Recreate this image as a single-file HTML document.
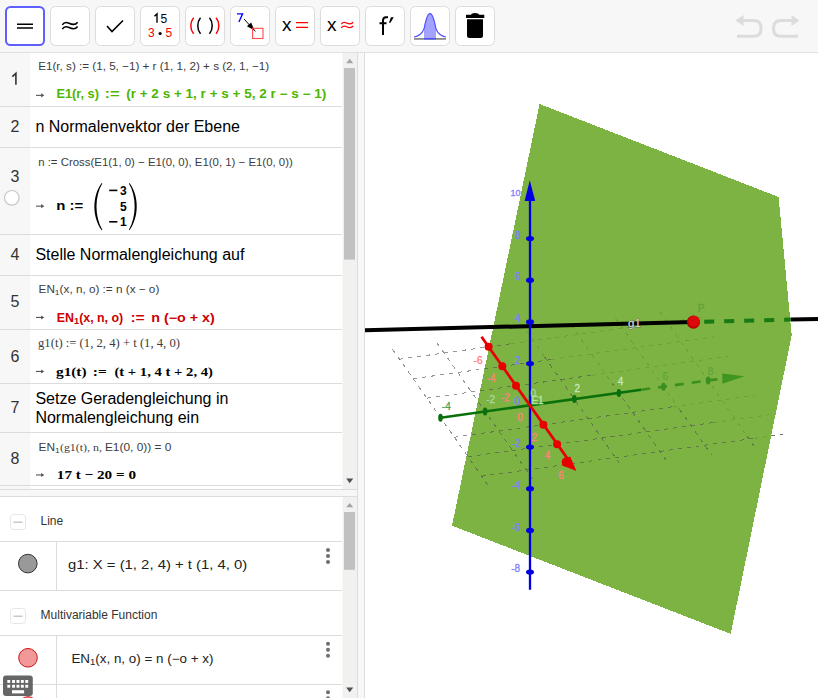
<!DOCTYPE html>
<html><head><meta charset="utf-8">
<style>
html,body{margin:0;padding:0;width:820px;height:700px;overflow:hidden;background:#fff}
svg{display:block}
text{font-family:"Liberation Sans",sans-serif}
.serif,.serif text,text.serif,tspan.serif{font-family:"Liberation Serif",serif}
</style></head><body>
<svg width="820" height="700" viewBox="0 0 820 700">
<!-- TOOLBAR -->
<rect x="0" y="0" width="818" height="52" fill="#f7f7f7"/>
<rect x="0" y="52" width="818" height="1" fill="#e0e0e0"/>
<g id="buttons">
<rect x="6" y="7" width="38" height="38" rx="4.5" fill="#fff" stroke="#5f5fff" stroke-width="2"/>
<rect x="50.5" y="6.5" width="39" height="39" rx="5" fill="#fff" stroke="#dcdcdc" stroke-width="1"/>
<rect x="95.5" y="6.5" width="39" height="39" rx="5" fill="#fff" stroke="#dcdcdc" stroke-width="1"/>
<rect x="140.5" y="6.5" width="39" height="39" rx="5" fill="#fff" stroke="#dcdcdc" stroke-width="1"/>
<rect x="185.5" y="6.5" width="39" height="39" rx="5" fill="#fff" stroke="#dcdcdc" stroke-width="1"/>
<rect x="230.5" y="6.5" width="39" height="39" rx="5" fill="#fff" stroke="#dcdcdc" stroke-width="1"/>
<rect x="275.5" y="6.5" width="39" height="39" rx="5" fill="#fff" stroke="#dcdcdc" stroke-width="1"/>
<rect x="320.5" y="6.5" width="39" height="39" rx="5" fill="#fff" stroke="#dcdcdc" stroke-width="1"/>
<rect x="365.5" y="6.5" width="39" height="39" rx="5" fill="#fff" stroke="#dcdcdc" stroke-width="1"/>
<rect x="410.5" y="6.5" width="39" height="39" rx="5" fill="#fff" stroke="#dcdcdc" stroke-width="1"/>
<rect x="455.5" y="6.5" width="39" height="39" rx="5" fill="#fff" stroke="#dcdcdc" stroke-width="1"/>
</g>
<!-- icons -->
<g fill="none" stroke="#000">
<path d="M17 24.2H33M17 28H33" stroke-width="1.6"/>
<path d="M62.3 24.8C63.8 22.3 66 21.8 69 23.2C72 24.6 75.5 25.2 77.6 22.2M62.3 29.1C63.8 26.6 66 26.1 69 27.5C72 28.9 75.5 29.5 77.6 26.5" stroke-width="1.5"/>
<path d="M107 26L112 31.5L123 20.5" stroke-width="1.6"/>
</g>
<path d="M154.4 16.3L157 13.9V22.7" fill="none" stroke="#000" stroke-width="1.4"/><text x="160.4" y="22.7" font-size="12" fill="#000">5</text>
<text x="148" y="37.2" font-size="12" fill="#f00">3</text>
<circle cx="160.1" cy="33.5" r="1.6" fill="#000"/>
<text x="165.5" y="37.2" font-size="12" fill="#f00">5</text>
<g fill="none" stroke-width="1.5" stroke-linecap="round">
<path d="M193.3 18.3C190 22 190 29.5 193.3 33.2" stroke="#f00"/>
<path d="M200.2 18.3C197 22 197 29.5 200.2 33.2" stroke="#000"/>
<path d="M209.8 18.3C213 22 213 29.5 209.8 33.2" stroke="#000"/>
<path d="M216.4 18.3C219.6 22 219.6 29.5 216.4 33.2" stroke="#f00"/>
</g>
<path d="M237 13.8H242.6L238.9 22" fill="none" stroke="#00f" stroke-width="1.35"/>
<path d="M244.1 19.1L255.4 31.4" stroke="#000" stroke-width="1"/>
<path d="M254.6 30.6L246.9 26.2L251.1 22.6Z" fill="#000"/>
<rect x="252.6" y="28.3" width="10.4" height="10.2" fill="none" stroke="#ff4a4a" stroke-width="1.1"/>
<text x="282" y="31" font-size="19" fill="#000">x</text>
<path d="M296 22.7H308M296 27.4H308" stroke="#f00" stroke-width="1.2"/>
<text x="327" y="31" font-size="19" fill="#000">x</text>
<path d="M341.3 24.2C342.5 22.4 344.2 22 346.5 23C349 24.1 351.5 24.6 353.2 22.2M341.3 27.9C342.5 26.1 344.2 25.7 346.5 26.7C349 27.8 351.5 28.3 353.2 25.9" fill="none" stroke="#f00" stroke-width="1.2"/>
<!-- f' -->
<path d="M383 35V20.5Q383 17.5 386 17.3L388 17.3M379.5 23.3H386.5" fill="none" stroke="#000" stroke-width="2"/>
<path d="M389 22.8L390.9 17.2H393.8L390.4 22.8Z" fill="#000"/>
<!-- bell -->
<path d="M424 30Q426 13 430 13Q434 13 436 30V38.3H424Z" fill="#a3a3ff"/>
<path d="M414 37Q421 36 424 29Q427 13.5 430 13.5Q433 13.5 436 29Q439 36 446 37" fill="none" stroke="#5050ff" stroke-width="1.2"/>
<rect x="414" y="38" width="32" height="1.8" fill="#8a8a8a"/>
<rect x="424" y="38" width="12" height="1.5" fill="#5050ff"/>
<!-- trash -->
<path d="M466 14.8H470.8Q471.6 13.1 475.1 13.1Q478.6 13.1 479.4 14.8H484.3V18H466Z" fill="#000"/>
<path d="M467 19.3H483V35.5Q483 38 480.5 38H469.5Q467 38 467 35.5Z" fill="#000"/>
<!-- undo redo -->
<g fill="none" stroke="#dcdcdc" stroke-width="3">
<path d="M742 20.5H753.6Q761.1 20.5 761.1 28.4Q761.1 36.3 753.6 36.3H737"/>
<path d="M793 20.5H781Q773.5 20.5 773.5 28.4Q773.5 36.3 781 36.3H798"/>
</g>
<path d="M735.5 20.5L743.5 15V26Z" fill="#dcdcdc"/>
<path d="M799.5 20.5L791.5 15V26Z" fill="#dcdcdc"/>
<!-- GFX -->
<defs><clipPath id="gclip"><rect x="365" y="53" width="453" height="645"/></clipPath><clipPath id="plclip"><path d="M539.6 104L778.6 197L791.7 335.4L730.7 633.9L452 525.7Z"/></clipPath></defs>
<g clip-path="url(#gclip)">
<g fill="none" stroke="#707070" stroke-width="1" stroke-dasharray="4 5" shape-rendering="crispEdges">
<path d="M510.9 343.7L700.5 317.4"/>
<path d="M551.4 359.5L714.2 336.9"/>
<path d="M591.8 375.3L727.9 356.4"/>
<path d="M672.7 406.8L755.3 395.4"/>
<path d="M713.2 422.6L769.0 414.9"/>
<path d="M753.7 438.4L782.7 434.4"/>
<path d="M526.4 330.9L544.6 356.9"/>
<path d="M571.0 324.7L612.1 383.2"/>
<path d="M615.6 318.4L679.5 409.4"/>
<path d="M660.2 312.2L746.9 435.8"/>
</g>
<path d="M539.6 104L778.6 197L791.7 335.4L730.7 633.9L452 525.7Z" fill="#6aa928" fill-opacity="0.88" shape-rendering="crispEdges"/>
<g fill="none" stroke="#505050" stroke-width="1" stroke-dasharray="4 5" stroke-opacity="0.6" shape-rendering="crispEdges">
<path d="M399.4 359.2L510.9 343.7"/>
<path d="M413.1 378.7L551.4 359.5"/>
<path d="M426.8 398.2L591.8 375.3"/>
<path d="M454.2 437.2L672.7 406.8"/>
<path d="M467.9 456.7L713.2 422.6"/>
<path d="M481.6 476.2L753.7 438.4"/>
<path d="M392.6 349.4L488.5 485.9"/>
<path d="M437.2 343.2L533.1 479.8"/>
<path d="M544.6 356.9L622.3 467.4"/>
<path d="M612.1 383.2L666.9 461.2"/>
<path d="M679.5 409.4L711.5 454.9"/>
<path d="M746.9 435.8L756.1 448.8"/>
</g>
<path d="M365 330.2L693.4 322.1" stroke="#000" stroke-width="4" fill="none"/>
<path d="M790.9 319.6L820 318.9" stroke="#000" stroke-width="4" fill="none"/>
<path d="M704.2 321.8L790.9 319.6" stroke="#187a14" stroke-width="4" stroke-dasharray="10 10" fill="none"/>
<path d="M440.5 417.7L641.2 389.8" stroke="#0b700b" stroke-width="2.6" fill="none"/>
<path d="M641.2 389.8L721.5 378.6" stroke="#3a8f1f" stroke-width="2.6" stroke-dasharray="9 8" fill="none"/>
<path d="M744.3 376.2L722.4 373.4L722.4 383.8Z" fill="#3f951f"/>
<ellipse cx="440.5" cy="417.7" rx="2.3" ry="4" fill="#0b700b"/>
<ellipse cx="485.1" cy="411.5" rx="2.3" ry="4" fill="#0b700b"/>
<ellipse cx="574.3" cy="399.1" rx="2.3" ry="4" fill="#0b700b"/>
<ellipse cx="618.9" cy="392.9" rx="2.3" ry="4" fill="#0b700b"/>
<ellipse cx="663.5" cy="386.7" rx="2.3" ry="4" fill="#3a8f1f"/>
<ellipse cx="708.1" cy="380.5" rx="2.3" ry="4" fill="#3a8f1f"/>
<path d="M530 589.7V200" stroke="#0000e0" stroke-width="2.3" fill="none"/>
<path d="M529.8 180.3L535.2 201L524.6 201Z" fill="#0000e0"/>
<ellipse cx="530" cy="572.1" rx="4" ry="2.6" fill="#0000e0"/>
<ellipse cx="530" cy="530.4" rx="4" ry="2.6" fill="#0000e0"/>
<ellipse cx="530" cy="488.7" rx="4" ry="2.6" fill="#0000e0"/>
<ellipse cx="530" cy="447.0" rx="4" ry="2.6" fill="#0000e0"/>
<ellipse cx="530" cy="363.6" rx="4" ry="2.6" fill="#0000e0"/>
<ellipse cx="530" cy="321.9" rx="4" ry="2.6" fill="#0000e0"/>
<ellipse cx="530" cy="280.2" rx="4" ry="2.6" fill="#0000e0"/>
<ellipse cx="530" cy="238.5" rx="4" ry="2.6" fill="#0000e0"/>
<path d="M481.5 336.8L572 465" stroke="#e80000" stroke-width="2.8" fill="none"/>
<circle cx="488.6" cy="346.8" r="4" fill="#e80000"/>
<circle cx="502.3" cy="366.3" r="4" fill="#e80000"/>
<circle cx="516.0" cy="385.8" r="4" fill="#e80000"/>
<circle cx="543.4" cy="424.8" r="4" fill="#e80000"/>
<circle cx="557.1" cy="444.3" r="4" fill="#e80000"/>
<path d="M576.4 471L561.8 465.2Q563.5 457.5 570.2 456.5Z" fill="#e80000"/>
<circle cx="566.5" cy="462" r="4.8" fill="#e80000"/>
<g font-size="10" text-anchor="middle">
<text x="478.0" y="363.6" font-size="10" fill="#ff8080" stroke="#ff8080" stroke-width="0.3">-6</text>
<text x="491.0" y="382.4" font-size="10" fill="#ff8080" stroke="#ff8080" stroke-width="0.3">-4</text>
<text x="505.0" y="401.3" font-size="10" fill="#ff8080" stroke="#ff8080" stroke-width="0.3">-2</text>
<text x="520.0" y="420.6" font-size="10" fill="#ff8080" stroke="#ff8080" stroke-width="0.3">0</text>
<text x="534.4" y="440.6" font-size="10" fill="#ff8080" stroke="#ff8080" stroke-width="0.3">2</text>
<text x="547.2" y="459.1" font-size="10" fill="#ff8080" stroke="#ff8080" stroke-width="0.3">4</text>
<text x="561.0" y="479.0" font-size="10" fill="#ff8080" stroke="#ff8080" stroke-width="0.3">6</text>
<text x="515.5" y="196.2" font-size="9" fill="#8080ff" stroke="#8080ff" stroke-width="0.3">10</text>
<text x="517.5" y="238.6" font-size="10" fill="#8080ff" stroke="#8080ff" stroke-width="0.3">8</text>
<text x="517.5" y="280.0" font-size="10" fill="#8080ff" stroke="#8080ff" stroke-width="0.3">6</text>
<text x="517.5" y="321.7" font-size="10" fill="#8080ff" stroke="#8080ff" stroke-width="0.3">4</text>
<text x="517.5" y="363.6" font-size="10" fill="#8080ff" stroke="#8080ff" stroke-width="0.3">2</text>
<text x="517.0" y="404.5" font-size="10" fill="#8080ff" stroke="#8080ff" stroke-width="0.3">0</text>
<text x="516.0" y="447.0" font-size="10" fill="#8080ff" stroke="#8080ff" stroke-width="0.3">-2</text>
<text x="515.7" y="489.2" font-size="10" fill="#8080ff" stroke="#8080ff" stroke-width="0.3">-4</text>
<text x="515.7" y="531.1" font-size="10" fill="#8080ff" stroke="#8080ff" stroke-width="0.3">-6</text>
<text x="515.7" y="572.2" font-size="10" fill="#8080ff" stroke="#8080ff" stroke-width="0.3">-8</text>
<text x="446.3" y="409.6" font-size="10" fill="#55a055" stroke="#55a055" stroke-width="0.3">-4</text>
<text x="490.6" y="403.3" font-size="10" fill="#a8d8a0" stroke="#a8d8a0" stroke-width="0.3">-2</text>
<text x="533.4" y="396.6" font-size="10" fill="#a8d8a0" stroke="#a8d8a0" stroke-width="0.3">0</text>
<text x="577.4" y="391.6" font-size="10" fill="#c8e8c0" stroke="#c8e8c0" stroke-width="0.3">2</text>
<text x="620.6" y="384.9" font-size="10" fill="#c8e8c0" stroke="#c8e8c0" stroke-width="0.3">4</text>
<text x="665.2" y="379.8" font-size="10" fill="#5fa83a" stroke="#5fa83a" stroke-width="0.3">6</text>
<text x="710.5" y="374.7" font-size="10" fill="#5fa83a" stroke="#5fa83a" stroke-width="0.3">8</text>
<text x="537.5" y="404.0" font-size="10" fill="#b8e8a0" stroke="#b8e8a0" stroke-width="0.3">E1</text>
<text x="701.0" y="311.6" font-size="10" fill="#5fa03a" stroke="#5fa03a" stroke-width="0.3">P</text>
</g>
<text x="634.5" y="326.5" font-size="11.5" text-anchor="middle" fill="#e0e0e0" stroke="#3a3a3a" stroke-width="0.7" paint-order="stroke">g1</text>
<circle cx="693.4" cy="322.1" r="6.6" fill="#b80000"/>
<circle cx="694" cy="321.4" r="5.6" fill="#dd0a0a"/>
</g>
<!-- /GFX -->
<!-- ALGEBRA PANEL -->
<g id="alg">
<rect x="0" y="53" width="30" height="436" fill="#f7f7f7"/>
<g fill="#dcdcdc">
<rect x="0" y="106" width="342" height="1"/>
<rect x="0" y="147" width="342" height="1"/>
<rect x="0" y="234" width="342" height="1"/>
<rect x="0" y="275" width="342" height="1"/>
<rect x="0" y="329" width="342" height="1"/>
<rect x="0" y="383" width="342" height="1"/>
<rect x="0" y="432" width="342" height="1"/>
<rect x="0" y="485" width="342" height="1"/>
</g>
<rect x="0" y="489" width="357" height="1" fill="#dcdcdc"/>
<rect x="0" y="490" width="357" height="6" fill="#f7f7f7"/>
<rect x="0" y="496" width="357" height="1" fill="#dcdcdc"/>
<g font-size="16" fill="#333" text-anchor="middle">

<text x="15" y="131.7">2</text>
<text x="15" y="181.5">3</text>
<text x="15" y="260.1">4</text>
<text x="15" y="307.4">5</text>
<text x="15" y="361.7">6</text>
<text x="15" y="413">7</text>
<text x="15" y="463.6">8</text>
</g>
<path d="M12.3 76.6L15.9 73.4V84.7" fill="none" stroke="#333" stroke-width="1.6"/>
<circle cx="11.8" cy="197.8" r="7.3" fill="#fff" stroke="#c8c8c8" stroke-width="1.2"/>
<g font-size="16" fill="#000">
<text x="35.4" y="132">n Normalenvektor der Ebene</text>
<text x="35.4" y="260.1">Stelle Normalengleichung auf</text>
<text x="35.4" y="403.8">Setze Geradengleichung in</text>
<text x="35.4" y="422.6">Normalengleichung ein</text>
</g>
<!-- arrows -->
<g fill="#555"><rect x="36" y="94.8" width="6" height="1.1"/><path d="M41.2 93.2L44.3 95.3L41.2 97.4Z"/><rect x="36" y="205.6" width="6" height="1.1"/><path d="M41.2 204.1L44.3 206.2L41.2 208.3Z"/><rect x="36" y="316.9" width="6" height="1.1"/><path d="M41.2 315.4L44.3 317.5L41.2 319.6Z"/><rect x="36" y="370.9" width="6" height="1.1"/><path d="M41.2 369.4L44.3 371.5L41.2 373.6Z"/><rect x="36" y="474.4" width="6" height="1.1"/><path d="M41.2 472.9L44.3 475.0L41.2 477.1Z"/></g>
<g font-size="11" fill="#3c3c3c">
<text x="38.2" y="70" textLength="231" lengthAdjust="spacingAndGlyphs">E1(r, s) := (1, 5, −1) + r (1, 1, 2) + s (2, 1, −1)</text>
<text x="38.2" y="165.5" textLength="254.6" lengthAdjust="spacingAndGlyphs">n := Cross(E1(1, 0) − E1(0, 0), E1(0, 1) − E1(0, 0))</text>
<text x="38.6" y="292.8" textLength="120.7" lengthAdjust="spacingAndGlyphs">EN<tspan font-size="8" dy="2">1</tspan><tspan dy="-2">(x, n, o) := n (x − o)</tspan></text>
<text x="38.6" y="450.7" textLength="132.8" lengthAdjust="spacingAndGlyphs">EN<tspan font-size="8" dy="2">1</tspan><tspan dy="-2" class="serif">(g1(t), n, </tspan><tspan>E1(0, 0)) = 0</tspan></text>
</g>
<text class="serif" x="38" y="347" font-size="12" fill="#3c3c3c" textLength="142" lengthAdjust="spacingAndGlyphs">g1(t) := (1, 2, 4) + t (1, 4, 0)</text>
<g font-weight="bold" font-size="12">
<g fill="#4cb600"><text x="56.6" y="98.3" textLength="42.3" lengthAdjust="spacingAndGlyphs">E1(r, s)</text><text x="104.6" y="98.3" textLength="15.2" lengthAdjust="spacingAndGlyphs">:=</text><text x="126.2" y="98.3" textLength="200" lengthAdjust="spacingAndGlyphs">(r + 2 s + 1, r + s + 5, 2 r − s − 1)</text></g>
<text x="56.3" y="209.8" fill="#000" textLength="27" lengthAdjust="spacingAndGlyphs">n :=</text>
<g fill="#cc0000"><text x="56.8" y="321.5" textLength="66.4" lengthAdjust="spacingAndGlyphs">EN<tspan font-size="9" dy="2">1</tspan><tspan dy="-2">(x, n, o)</tspan></text><text x="130.4" y="321.5" textLength="14.4" lengthAdjust="spacingAndGlyphs">:=</text><text x="151.2" y="321.5" textLength="63.6" lengthAdjust="spacingAndGlyphs">n (−o + x)</text></g>
<g class="serif" fill="#000" font-size="13"><text x="56" y="375.5" textLength="30.5" lengthAdjust="spacingAndGlyphs">g1(t)</text><text x="92.8" y="375.5" textLength="14" lengthAdjust="spacingAndGlyphs">:=</text><text x="114.4" y="375.5" textLength="98.6" lengthAdjust="spacingAndGlyphs">(t + 1, 4 t + 2, 4)</text></g>
<text class="serif" x="56.8" y="479.4" fill="#000" font-size="13" textLength="79.2" lengthAdjust="spacingAndGlyphs">17 t − 20 = 0</text>
<rect x="109.2" y="189.6" width="8.2" height="1.6" fill="#000"/><text x="126.6" y="194.8" text-anchor="end">3</text>
<text x="126.6" y="210.9" text-anchor="end">5</text>
<rect x="109.2" y="221" width="8.2" height="1.6" fill="#000"/><text x="126.6" y="226.2" text-anchor="end">1</text>
</g>
<path d="M101.7 183C92 196 92 217 101.7 230.3L102.3 229.7C94.6 217 94.6 196 102.3 183.6Z" fill="#000"/>
<path d="M129.5 183C139.2 196 139.2 217 129.5 230.3L128.9 229.7C136.6 217 136.6 196 128.9 183.6Z" fill="#000"/>
<!-- scrollbar upper -->
<rect x="342.5" y="53" width="14.5" height="436" fill="#f1f1f0"/>
<rect x="344" y="68" width="11" height="191.6" fill="#c1c1c1"/>
<path d="M346.2 63.2L349.7 58.8L353.2 63.2Z" fill="#a3a3a3"/>
<path d="M346.2 478.6L349.7 483.2L353.2 478.6Z" fill="#505050"/>
</g>
<!-- LOWER PANEL -->
<g id="low">
<rect x="10.5" y="514.5" width="15" height="15" rx="3" fill="#fff" stroke="#e6e6e6" stroke-width="1"/>
<rect x="13.5" y="521.5" width="9" height="1.5" fill="#c8c8c8"/>
<text x="40.5" y="525.4" font-size="12" fill="#333">Line</text>
<rect x="0" y="541" width="342" height="1" fill="#dcdcdc"/>
<rect x="56" y="542" width="1" height="48" fill="#dcdcdc"/>
<circle cx="27.8" cy="563.6" r="9.3" fill="#999" stroke="#333" stroke-width="1"/>
<text x="68" y="569.4" font-size="13.5" fill="#222" textLength="179.3" lengthAdjust="spacingAndGlyphs">g1: X = (1, 2, 4) + t (1, 4, 0)</text>
<g fill="#6e6e6e">
<circle cx="328" cy="550" r="2"/><circle cx="328" cy="556" r="2"/><circle cx="328" cy="562" r="2"/>
<circle cx="328" cy="643.7" r="2"/><circle cx="328" cy="649.7" r="2"/><circle cx="328" cy="655.7" r="2"/>
<circle cx="328" cy="692.2" r="2"/><circle cx="328" cy="698.2" r="2"/>
</g>
<rect x="0" y="590" width="342" height="1" fill="#dcdcdc"/>
<rect x="10.5" y="608.5" width="15" height="15" rx="3" fill="#fff" stroke="#e6e6e6" stroke-width="1"/>
<rect x="13.5" y="615.5" width="9" height="1.5" fill="#c8c8c8"/>
<text x="40.6" y="618.8" font-size="12" fill="#333">Multivariable Function</text>
<rect x="0" y="635" width="342" height="1" fill="#dcdcdc"/>
<rect x="56" y="636" width="1" height="64" fill="#dcdcdc"/>
<circle cx="28" cy="657.8" r="9.3" fill="#f19999" stroke="#cc1111" stroke-width="1"/>
<text x="71.4" y="662.8" font-size="12" fill="#222" textLength="142" lengthAdjust="spacingAndGlyphs">EN<tspan font-size="8.5" dy="2">1</tspan><tspan dy="-2">(x, n, o)  =  n (−o + x)</tspan></text>
<rect x="0" y="684" width="342" height="1" fill="#dcdcdc"/>
<circle cx="28" cy="706" r="9.3" fill="#f19999" stroke="#cc1111" stroke-width="1"/>
<!-- keyboard -->
<rect x="3" y="675.5" width="29.8" height="20.5" rx="3" fill="#666"/>
<g fill="#fff">
<rect x="7.3" y="680" width="2.9" height="2.9"/><rect x="12.1" y="680" width="2.9" height="2.9"/><rect x="16.5" y="680" width="2.9" height="2.9"/><rect x="20.9" y="680" width="2.9" height="2.9"/><rect x="25.3" y="680" width="2.9" height="2.9"/>
<rect x="7.3" y="684.8" width="2.9" height="2.9"/><rect x="12.1" y="684.8" width="2.9" height="2.9"/><rect x="16.5" y="684.8" width="2.9" height="2.9"/><rect x="20.9" y="684.8" width="2.9" height="2.9"/><rect x="25.3" y="684.8" width="2.9" height="2.9"/>
<rect x="12" y="690.2" width="12.1" height="3.2"/>
</g>
<!-- lower scrollbar -->
<rect x="342.5" y="497" width="14.5" height="203" fill="#f1f1f0"/>
<rect x="344" y="512" width="11" height="57.8" fill="#c1c1c1"/>
<path d="M346.2 507.3L349.7 502.9L353.2 507.3Z" fill="#a3a3a3"/>
<path d="M346.2 687.6L349.7 692.2L353.2 687.6Z" fill="#505050"/>
</g>
<!-- DIVIDER -->
<rect x="357" y="53" width="1" height="647" fill="#dcdcdc"/>
<rect x="358" y="53" width="6" height="647" fill="#f7f7f7"/>
<rect x="364" y="53" width="1" height="647" fill="#dcdcdc"/>
<rect id="botclip" x="0" y="698" width="365" height="2" fill="#fff"/>
</svg>
</body></html>
